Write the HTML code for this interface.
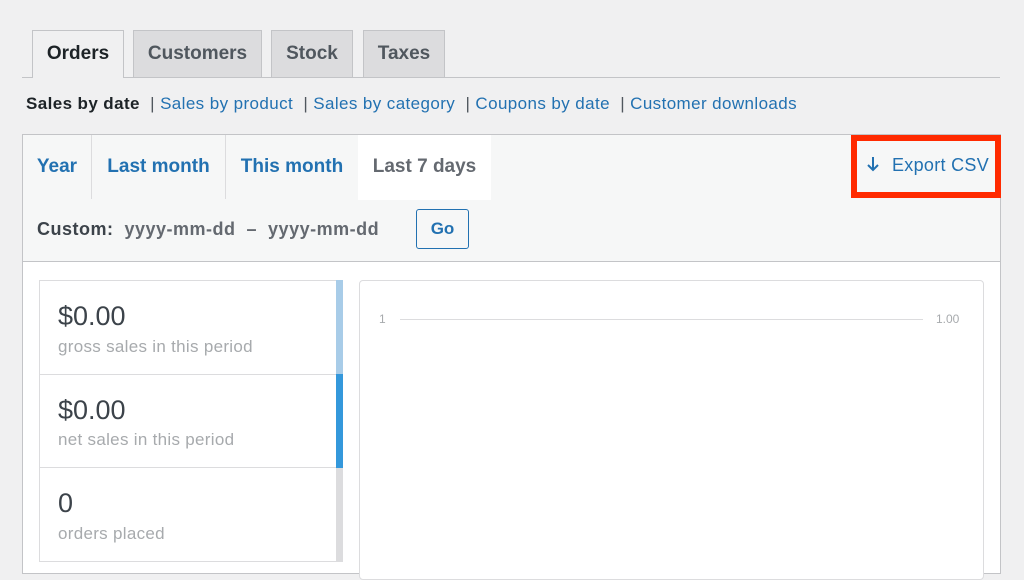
<!DOCTYPE html>
<html><head><meta charset="utf-8"><style>
*{box-sizing:border-box;margin:0;padding:0}
body{width:1024px;height:564px;overflow:hidden;background:#f0f0f1;font-family:"Liberation Sans",sans-serif;position:relative}
.a{position:absolute}
.tab{position:absolute;top:30px;height:48px;border:1px solid #c3c4c7;border-bottom:none;background:#dcdcde;color:#50575e;font-weight:bold;font-size:19px;text-align:center;line-height:46px}
.blue{color:#2271b1}
.rt{position:absolute;top:135px;height:64px;line-height:64px;font-size:19px;font-weight:bold;color:#2271b1;text-align:center}
.sep{position:absolute;top:135px;height:64px;width:1px;background:#dcdcde}
.stat{position:absolute;left:39px;width:304px;background:#fff;border:1px solid #dcdcde}
.big{position:absolute;left:18px;font-size:27px;color:#3c434a}
.sm{position:absolute;left:18px;font-size:17px;color:#a7aaad;letter-spacing:0.3px}
</style></head><body>
<div class="tab" style="left:32px;width:92px;background:#f0f0f1;color:#1d2327;height:48px;z-index:2">Orders</div>
<div class="tab" style="left:133px;width:129px">Customers</div>
<div class="tab" style="left:271px;width:82px">Stock</div>
<div class="tab" style="left:363px;width:82px">Taxes</div>
<div class="a" style="left:22px;top:77px;width:978px;height:1px;background:#c3c4c7"></div>
<div class="a" style="left:26px;top:94px;font-size:17px;color:#50575e;white-space:nowrap;letter-spacing:0.4px"><b style="color:#1d2327">Sales by date</b> &nbsp;| <span class="blue">Sales by product</span> &nbsp;| <span class="blue">Sales by category</span> &nbsp;| <span class="blue">Coupons by date</span> &nbsp;| <span class="blue">Customer downloads</span></div>
<div class="a" style="left:22px;top:134px;width:979px;height:440px;border:1px solid #c3c4c7;background:#fff"></div>
<div class="a" style="left:23px;top:135px;width:977px;height:127px;background:#f6f7f7;border-bottom:1px solid #c3c4c7"></div>
<div class="a" style="left:358px;top:135px;width:133px;height:65px;background:#fff"></div>
<div class="rt" style="left:23px;width:68px">Year</div>
<div class="sep" style="left:91px"></div>
<div class="rt" style="left:92px;width:133px">Last month</div>
<div class="sep" style="left:225px"></div>
<div class="rt" style="left:226px;width:132px">This month</div>
<div class="rt" style="left:358px;width:133px;color:#646970">Last 7 days</div>
<div class="a" style="left:37px;top:219px;font-size:18px;font-weight:bold;color:#3c434a;white-space:nowrap;letter-spacing:0.5px">Custom:&nbsp; <span style="color:#646970">yyyy-mm-dd&nbsp; –&nbsp; yyyy-mm-dd</span></div>
<div class="a" style="left:416px;top:209px;width:53px;height:40px;border:1px solid #2271b1;border-radius:3px;background:#f6f7f7;color:#2271b1;font-weight:bold;font-size:17px;text-align:center;line-height:38px">Go</div>
<div class="a" style="left:851px;top:135px;width:150px;height:63px;border:6px solid #ff2a00"></div>
<svg class="a" style="left:866px;top:156px" width="14" height="16" viewBox="0 0 14 16"><path d="M7 1V14M2 9L7 14L12 9" fill="none" stroke="#2271b1" stroke-width="2"/></svg>
<div class="a" style="left:892px;top:155px;font-size:18px;color:#2271b1;white-space:nowrap;letter-spacing:0.3px">Export CSV</div>
<div class="stat" style="top:280px;height:95px"><div class="big" style="top:20px">$0.00</div><div class="sm" style="top:56px">gross sales in this period</div></div>
<div class="stat" style="top:374px;height:94px"><div class="big" style="top:20px">$0.00</div><div class="sm" style="top:55px">net sales in this period</div></div>
<div class="stat" style="top:467px;height:95px"><div class="big" style="top:20px">0</div><div class="sm" style="top:56px">orders placed</div></div>
<div class="a" style="left:336px;top:280px;width:7px;height:94px;background:#a8cce8"></div>
<div class="a" style="left:336px;top:374px;width:7px;height:94px;background:#3498db"></div>
<div class="a" style="left:336px;top:468px;width:7px;height:94px;background:#dcdcde"></div>
<div class="a" style="left:359px;top:280px;width:625px;height:300px;border:1px solid #dcdcde;border-radius:4px;background:#fff"></div>
<div class="a" style="left:379px;top:312px;font-size:12px;color:#a7aaad">1</div>
<div class="a" style="left:400px;top:319px;width:523px;height:1px;background:#dcdcde"></div>
<div class="a" style="left:936px;top:312px;font-size:12px;color:#a7aaad">1.00</div>
</body></html>
